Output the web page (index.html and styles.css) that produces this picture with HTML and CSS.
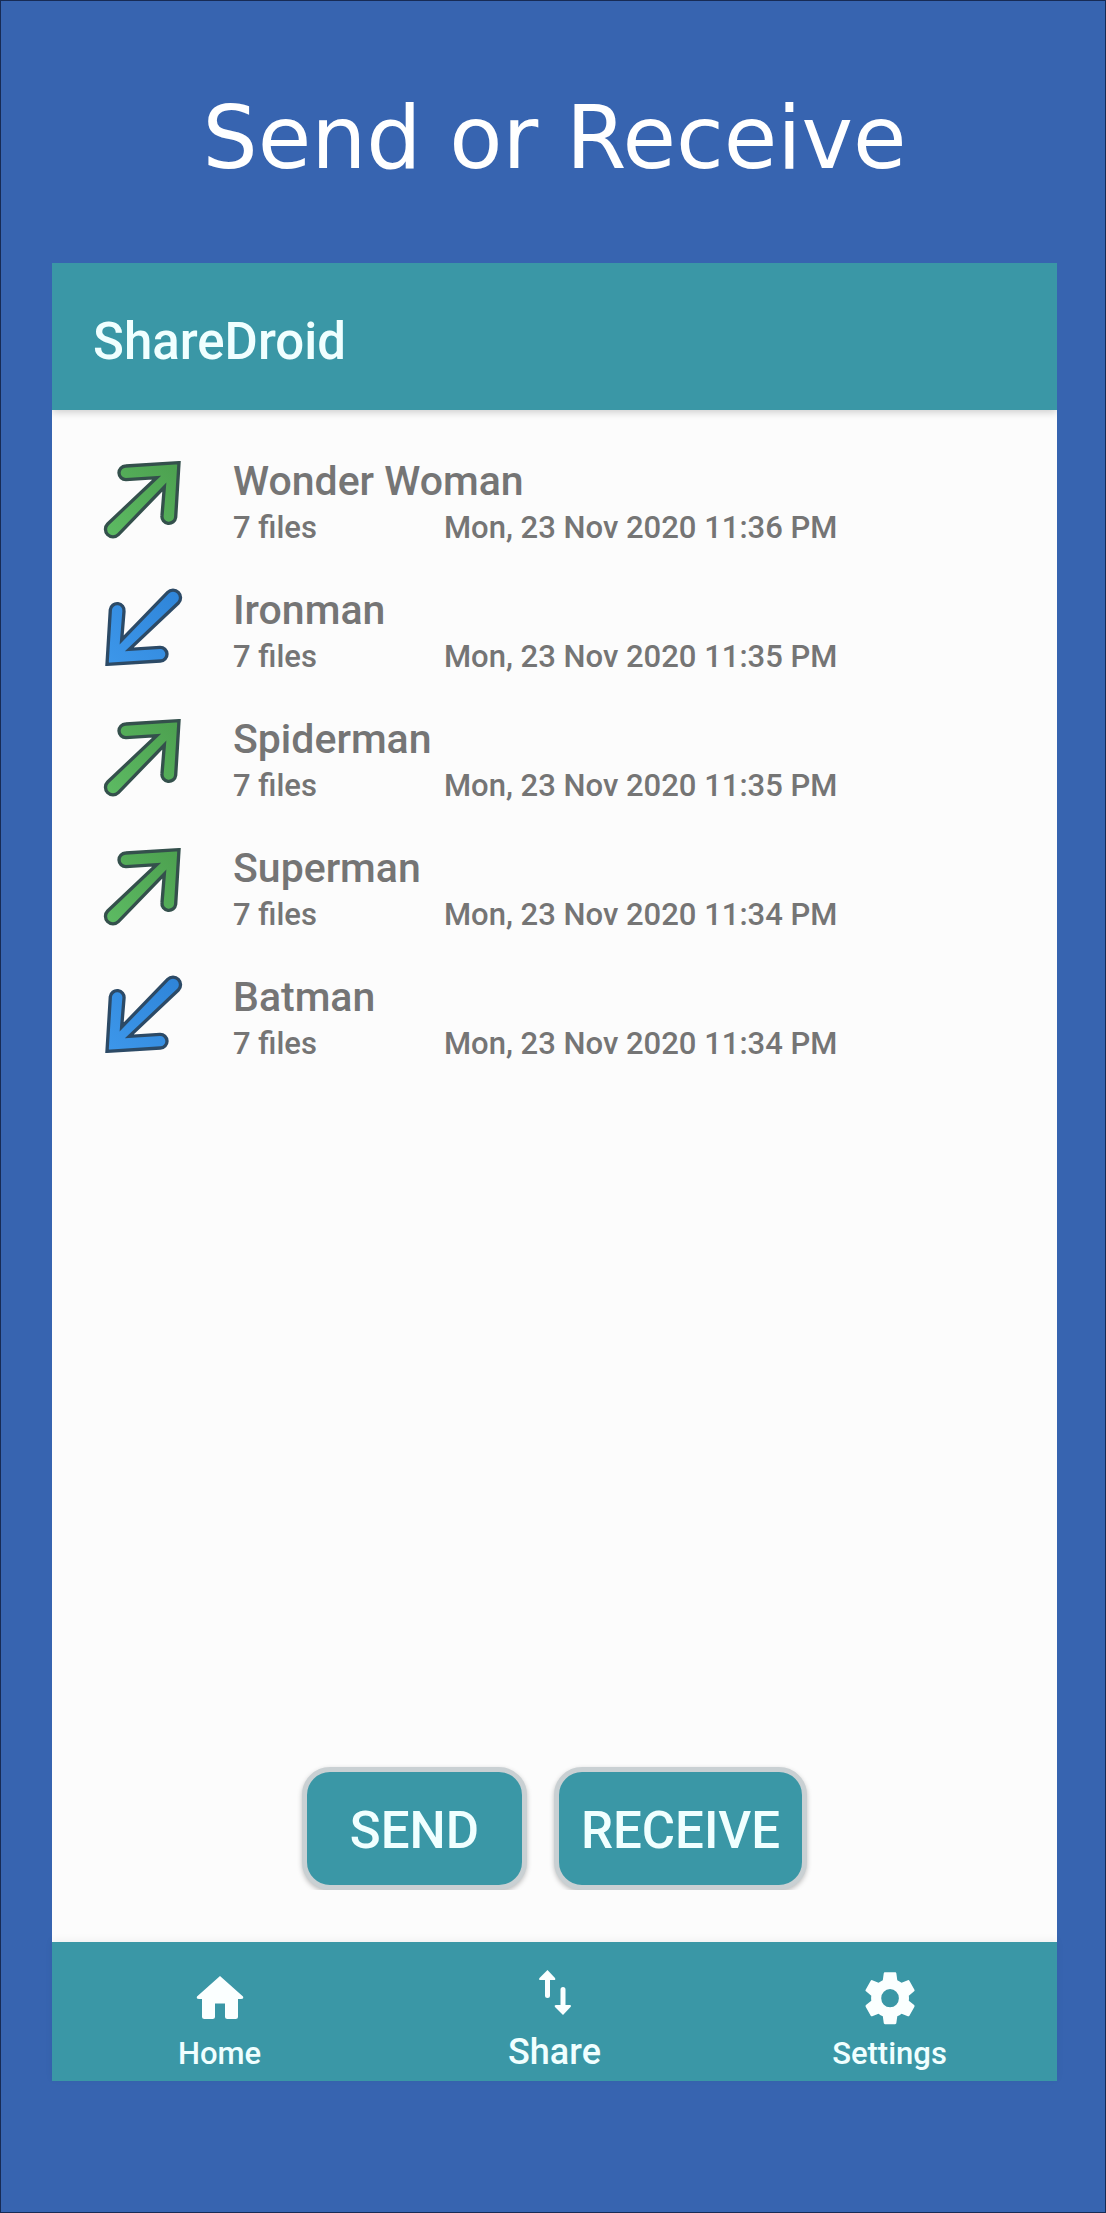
FILE: index.html
```html
<!DOCTYPE html>
<html lang="en">
<head>
<meta charset="utf-8">
<meta name="viewport" content="width=device-width, initial-scale=1">
<title>ShareDroid</title>
<link rel="stylesheet" href="styles.css">
</head>
<body>
<svg class="defs" aria-hidden="true">
  <defs>
    <linearGradient id="green" x1="0" y1="1" x2="1" y2="0"><stop offset="0" stop-color="#5dbb63"/><stop offset="1" stop-color="#4ca04f"/></linearGradient>
    <linearGradient id="blue" x1="0" y1="1" x2="1" y2="0"><stop offset="0" stop-color="#2e84d8"/><stop offset="1" stop-color="#3d97ea"/></linearGradient>
    <symbol id="arrow" viewBox="35 59 246 246">
      <path d="M266 73 L106 83 A20 20 0 0 0 107 124 L199 118 L52 257 A21 21 0 0 0 84 289 L222 146 L215 232 A20 20 0 0 0 256 237 Z" stroke-width="10" stroke-linejoin="miter"/>
    </symbol>
  </defs>
</svg>
<main class="poster">
  <h1 class="headline">Send or Receive</h1>
  <section class="phone">
    <header class="appbar"><h2 class="appname">ShareDroid</h2></header>
    <div class="content">
      <ul class="transfers">
        <li class="transfer">
          <svg class="direction sent" role="img" aria-label="Sent"><use href="#arrow"/></svg>
          <div class="details"><span class="name">Wonder Woman</span><span class="files">7 files</span><time class="date">Mon, 23 Nov 2020 11:36 PM</time></div>
        </li>
        <li class="transfer">
          <svg class="direction received" role="img" aria-label="Received"><use href="#arrow"/></svg>
          <div class="details"><span class="name">Ironman</span><span class="files">7 files</span><time class="date">Mon, 23 Nov 2020 11:35 PM</time></div>
        </li>
        <li class="transfer">
          <svg class="direction sent" role="img" aria-label="Sent"><use href="#arrow"/></svg>
          <div class="details"><span class="name">Spiderman</span><span class="files">7 files</span><time class="date">Mon, 23 Nov 2020 11:35 PM</time></div>
        </li>
        <li class="transfer">
          <svg class="direction sent" role="img" aria-label="Sent"><use href="#arrow"/></svg>
          <div class="details"><span class="name">Superman</span><span class="files">7 files</span><time class="date">Mon, 23 Nov 2020 11:34 PM</time></div>
        </li>
        <li class="transfer">
          <svg class="direction received" role="img" aria-label="Received"><use href="#arrow"/></svg>
          <div class="details"><span class="name">Batman</span><span class="files">7 files</span><time class="date">Mon, 23 Nov 2020 11:34 PM</time></div>
        </li>
      </ul>
      <div class="actions">
        <button class="action" type="button">SEND</button>
        <button class="action" type="button">RECEIVE</button>
      </div>
    </div>
    <nav class="tabs">
      <a class="tab" href="#home">
        <svg class="tab-icon" viewBox="0 0 60 60" aria-hidden="true"><path d="M30 8L53 28.500Q54 31 51 31H48V48.500Q48 51 45.500 51H37.500Q35 51 35 48.500V35.500H25V48.500Q25 51 22.500 51H14.500Q12 51 12 48.500V31H9Q6 31 7 28.500Z"/></svg>
        <span>Home</span>
      </a>
      <a class="tab active" href="#share" aria-current="page">
        <svg class="tab-icon" viewBox="0 0 60 60" aria-hidden="true"><path d="M22.500 2L30 10Q31 12 29 12H25V27.500A2.500 2.500 0 0 1 20 27.500V12H16Q13 12 14.500 10ZM38 47L30 39Q29 37 31 37H35.500V21.500A2.500 2.500 0 0 1 40.500 21.500V37H44.500Q47 37 45.500 39Z"/></svg>
        <span>Share</span>
      </a>
      <a class="tab" href="#settings">
        <svg class="tab-icon" viewBox="0 0 24 24" aria-hidden="true"><path transform="translate(-.1 -.4) scale(1.01 1.04)" d="M19.430 12.980c.04-.32.070-.640.070-.980s-.030-.660-.070-.980l2.110-1.650c.19-.15.240-.42.120-.64l-2-3.460c-.12-.22-.39-.3-.61-.22l-2.490 1c-.52-.4-1.080-.73-1.690-.98l-.38-2.650C14.460 2.180 14.250 2 14 2h-4c-.25 0-.46.180-.49.420l-.38 2.650c-.61.250-1.170.590-1.690.980l-2.490-1c-.23-.09-.49 0-.61.220l-2 3.460c-.13.220-.07.490.12.640l2.110 1.650c-.04.320-.07.650-.07.980s.030.660.070.980l-2.110 1.650c-.19.150-.24.420-.12.640l2 3.460c.12.220.39.300.61.220l2.490-1c.52.400 1.080.730 1.690.980l.38 2.650c.03.240.240.420.490.420h4c.25 0 .46-.18.490-.42l.38-2.650c.61-.25 1.170-.59 1.690-.98l2.490 1c.23.090.490 0 .61-.22l2-3.460c.12-.22.070-.49-.12-.64l-2.110-1.650zM12 15.500a3.500 3.500 0 1 1 0-7 3.500 3.500 0 0 1 0 7z"/></svg>
        <span>Settings</span>
      </a>
    </nav>
  </section>
</main>
</body>
</html>
```
FILE: styles.css
```css
* { box-sizing: border-box; }

body {
  margin: 0;
  font-family: Roboto, "Liberation Sans", sans-serif;
  font-weight: 500;
}

.defs { position: absolute; width: 0; height: 0; }

.poster {
  display: flex;
  flex-direction: column;
  min-height: 100vh;
  padding: 83px 48px 131px 51px;
  border: 1px solid #172b55;
  background: #3764b0;
}

.headline {
  margin: 0 0 71px;
  color: #fff;
  font: 400 87px/108px "DejaVu Sans", sans-serif;
  text-align: center;
}

.phone {
  flex: 1;
  display: flex;
  flex-direction: column;
  background: #fcfcfc;
}

.appbar {
  padding: 49px 41px 38px;
  background: #3a97a6;
  box-shadow: 0 2px 8px rgba(0, 0, 0, .2);
  clip-path: inset(0 0 -12px 0);
}

.appname {
  margin: 0;
  color: #f0ffff;
  font-size: 51px;
  font-weight: 500;
  line-height: 60px;
}

.content {
  flex: 1;
  display: flex;
  flex-direction: column;
  justify-content: space-between;
  padding: 45px 50px 52px;
}

.transfers {
  display: flex;
  flex-direction: column;
  gap: 36px;
  margin: 0;
  padding: 0;
  list-style: none;
}

.transfer { display: flex; gap: 49px; }

.direction { width: 82px; height: 82px; margin-top: 3px; }
.sent { fill: url(#green); stroke: #34504c; }
.received { fill: url(#blue); stroke: #2c4a66; transform: rotate(180deg); }

.details {
  display: grid;
  grid-template-columns: 211px auto;
  color: #757575;
  font-size: 31px;
  line-height: 41px;
}

.name { grid-column: 1 / -1; font-size: 41px; line-height: 52px; }

.actions { display: flex; justify-content: center; gap: 27px; }

.action {
  padding: 30px 22px 26px;
  min-width: 225px;
  border: 5px solid #c9d0d3;
  border-radius: 28px;
  background: #3a97a6;
  box-shadow: 0 2px 5px rgba(0, 0, 0, .25);
  clip-path: inset(-4px -6px 0 -6px);
  color: #f0ffff;
  font: 500 51px/57px Roboto, "Liberation Sans", sans-serif;
}

.tabs {
  display: grid;
  grid-template-columns: repeat(3, 1fr);
  padding: 26px 0 7px;
  background: #3a97a6;
  box-shadow: 0 -2px 8px rgba(0, 0, 0, .05);
}

.tab {
  display: flex;
  flex-direction: column;
  align-items: center;
  gap: 8px;
  color: #f0ffff;
  font-size: 31px;
  line-height: 36px;
  text-decoration: none;
}

.active { gap: 2px; font-size: 36px; line-height: 44px; }

.tab-icon { width: 60px; height: 60px; fill: #fbffff; }
```
